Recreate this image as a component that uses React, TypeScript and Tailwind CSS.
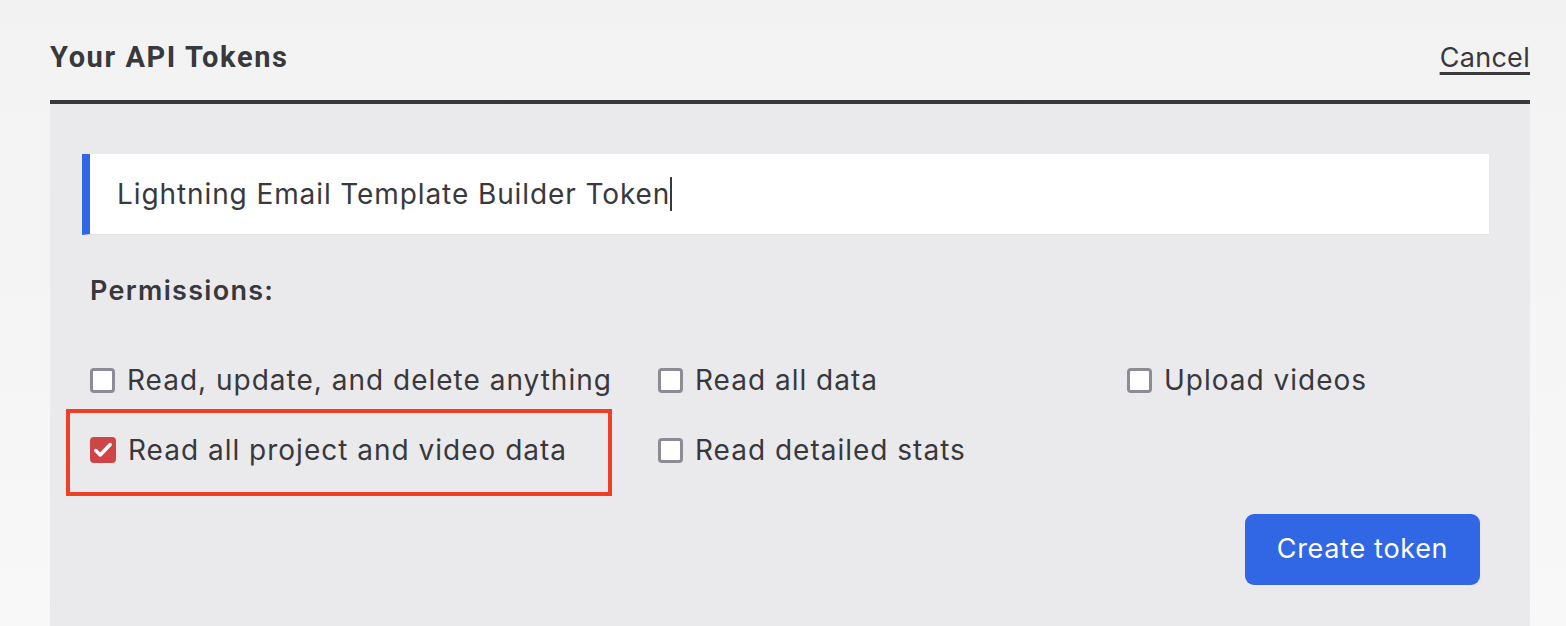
import React from 'react';

const perms = [
  { label: 'Read, update, and delete anything', checked: false },
  { label: 'Read all data', checked: false },
  { label: 'Upload videos', checked: false },
  { label: 'Read all project and video data', checked: true },
  { label: 'Read detailed stats', checked: false },
];

const Check: React.FC<{ checked: boolean }> = ({ checked }) =>
  checked ? (
    <span className="w-[26px] h-[26px] rounded-[4px] bg-[#cf4547] flex items-center justify-center flex-shrink-0">
      <svg width="22" height="22" viewBox="0 0 20 20" fill="none">
        <path d="M3.5 10.5l4 4L16.5 5" stroke="white" strokeWidth="3.2" strokeLinecap="round" strokeLinejoin="round" />
      </svg>
    </span>
  ) : (
    <span className="w-[25px] h-[25px] rounded-[4px] bg-white border-[3px] border-[#8c8c96] flex-shrink-0" />
  );

export default function App() {
  return (
    <div
      className="min-h-screen flex flex-col pl-[50px] pr-[36px] bg-gradient-to-b from-[#f2f2f2] to-[#f8f8f8] text-[#38383d]"
      style={{ fontFamily: 'Inter, "Noto Sans", sans-serif' }}
    >
      {/* Header */}
      <header className="h-[104px] pt-[14px] flex items-center justify-between border-b-4 border-[#38383c]">
        <h1 className="text-[29px] font-bold leading-none tracking-[1.6px]" style={{ fontFamily: 'Roboto, sans-serif' }}>
          Your API Tokens
        </h1>
        <a href="#" className="text-[27px] leading-none underline underline-offset-[5px] decoration-[3px] tracking-[0.3px]">
          Cancel
        </a>
      </header>

      {/* Panel */}
      <main className="relative flex-1 bg-[#eaeaec] pt-[50px] pl-[32px] pr-[41px] pb-[40px]">
        <div className="h-[81px] bg-white border-l-[8px] border-[#2f66e3] border-b border-b-[#e2e2e4] flex items-center pl-[27px]">
          <span className="text-[28px] leading-none tracking-[0.9px]">Lightning Email Template Builder Token</span>
          <span className="w-[2px] h-[34px] bg-[#38383d]" />
        </div>

        <div className="pl-[8px]">
          <h2 className="mt-[42px] text-[27px] font-semibold leading-none tracking-[1.3px]">Permissions:</h2>

          <div className="mt-[61px] grid grid-cols-[568px_469px_1fr] gap-y-[40px]">
            {perms.map((p) => (
              <label key={p.label} className="h-[30px] flex items-center gap-[12px]">
                <Check checked={p.checked} />
                <span className="text-[28px] leading-none whitespace-nowrap tracking-[1px]">{p.label}</span>
              </label>
            ))}
          </div>

          <div className="flex justify-end pr-[9px] mt-[49px]">
            <button className="w-[235px] h-[71px] rounded-[9px] bg-[#3166e5] text-white text-[27px] tracking-[0.7px]">
              Create token
            </button>
          </div>
        </div>

        {/* Highlight annotation */}
        <div className="absolute left-[16px] top-[305px] w-[546px] h-[87px] border-4 border-[#ef4027] pointer-events-none" />
      </main>
    </div>
  );
}
